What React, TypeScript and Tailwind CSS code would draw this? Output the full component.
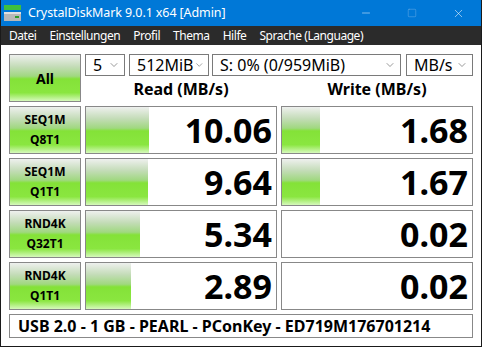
import { ChevronDown, Minus, Square, X } from "lucide-react";

const rows = [
  { top: "SEQ1M", bottom: "Q8T1", read: "10.06", readBar: 63, write: "1.68", writeBar: 38 },
  { top: "SEQ1M", bottom: "Q1T1", read: "9.64", readBar: 62, write: "1.67", writeBar: 38 },
  { top: "RND4K", bottom: "Q32T1", read: "5.34", readBar: 54, write: "0.02", writeBar: 0 },
  { top: "RND4K", bottom: "Q1T1", read: "2.89", readBar: 45, write: "0.02", writeBar: 0 },
];

const menu = ["Datei", "Einstellungen", "Profil", "Thema", "Hilfe", "Sprache (Language)"];

const combos = [
  { label: "5", w: "w-[40px]" },
  { label: "512MiB", w: "w-[80px]" },
  { label: "S: 0% (0/959MiB)", w: "w-[189px]" },
  { label: "MB/s", w: "w-[67px]" },
];

const green =
  "bg-[linear-gradient(to_bottom,#eef0ee_0%,#c4dcb8_25%,#a0d880_46%,#84e238_52%,#8ae640_82%,#d6f9bc_100%)]";

function DriveIcon() {
  return (
    <svg width="17" height="17" viewBox="0 0 17 17">
      <rect x="0" y="0" width="17" height="5" fill="#3fbf3f" />
      <rect x="0" y="7" width="17" height="9" fill="#b8b8b8" />
      <rect x="0" y="7" width="17" height="2" fill="#e0e0e0" />
      <rect x="11" y="11" width="4" height="2" fill="#2a9d2a" />
    </svg>
  );
}

function Combo({ label, w }: { label: string; w: string }) {
  return (
    <div
      className={`${w} h-[22px] flex items-center justify-between border border-[#7a7a7a] bg-white pl-[7px] pr-[4px] text-[16px] leading-none text-black`}
    >
      <span>{label}</span>
      <ChevronDown size={12} strokeWidth={1.2} className="text-[#555]" />
    </div>
  );
}

function Result({ value, bar }: { value: string; bar: number }) {
  return (
    <div className="w-[192px] h-[48px] flex border border-[#888] bg-white">
      {bar > 0 && <div className={`h-full ${green}`} style={{ width: bar }} />}
      <div className="flex-1 flex items-center justify-end pr-[4px] text-[34px] font-bold leading-none text-black">
        {value}
      </div>
    </div>
  );
}

export default function App() {
  return (
    <div className="w-[482px] h-[347px] flex flex-col bg-white border-x border-b border-[#1a1a1a] font-['Noto_Sans',sans-serif] overflow-hidden">
      <div className="h-[26px] flex items-center bg-[#0078d7] text-white">
        <div className="pl-[3px] pr-[7px]">
          <DriveIcon />
        </div>
        <span className="text-[12.5px] tracking-[-0.1px]">CrystalDiskMark 9.0.1 x64 [Admin]</span>
        <div className="ml-auto flex items-center h-full">
          <div className="w-[46px] flex justify-center">
            <Minus size={12} strokeWidth={1} />
          </div>
          <div className="w-[46px] flex justify-center text-[#80b8ea]">
            <Square size={10} strokeWidth={1} />
          </div>
          <div className="w-[46px] flex justify-center">
            <X size={13} strokeWidth={1} />
          </div>
        </div>
      </div>

      <div className="h-[19px] flex items-center gap-[13px] bg-[#2b2b2b] pl-[8px] text-[12px] tracking-[-0.45px] text-white">
        {menu.map((m) => (
          <span key={m}>{m}</span>
        ))}
      </div>

      <div className="flex flex-col px-[8px] pt-[9px]">
        <div className="flex gap-[4px]">
          <div
            className={`w-[72px] h-[48px] flex items-center justify-center border border-[#888] ${green} text-[14px] font-bold text-black`}
          >
            All
          </div>
          <div className="flex flex-col">
            <div className="flex">
              {combos.map((c, i) => (
                <div key={c.label} className={i === 0 ? "" : i === 2 ? "ml-[3px]" : i === 3 ? "ml-[5px]" : "ml-[4px]"}>
                  <Combo label={c.label} w={c.w} />
                </div>
              ))}
            </div>
            <div className="h-[26px] flex gap-[4px] text-[16px] font-bold text-black">
              <div className="w-[192px] flex items-center justify-center">Read (MB/s)</div>
              <div className="w-[192px] flex items-center justify-center">Write (MB/s)</div>
            </div>
          </div>
        </div>

        <div className="mt-[4px] flex flex-col gap-[4px]">
          {rows.map((r) => (
            <div key={r.top + r.bottom} className="flex gap-[4px]">
              <div
                className={`w-[72px] h-[48px] flex flex-col items-center justify-center border border-[#888] ${green} text-[12px] font-bold leading-[20px] text-black`}
              >
                <span>{r.top}</span>
                <span>{r.bottom}</span>
              </div>
              <Result value={r.read} bar={r.readBar} />
              <Result value={r.write} bar={r.writeBar} />
            </div>
          ))}
        </div>

        <div className="mt-[4px] w-[464px] h-[24px] flex items-center border border-[#888] bg-white pl-[8px] text-[16px] font-bold text-black">
          USB 2.0 - 1 GB - PEARL - PConKey - ED719M176701214
        </div>
      </div>
    </div>
  );
}
